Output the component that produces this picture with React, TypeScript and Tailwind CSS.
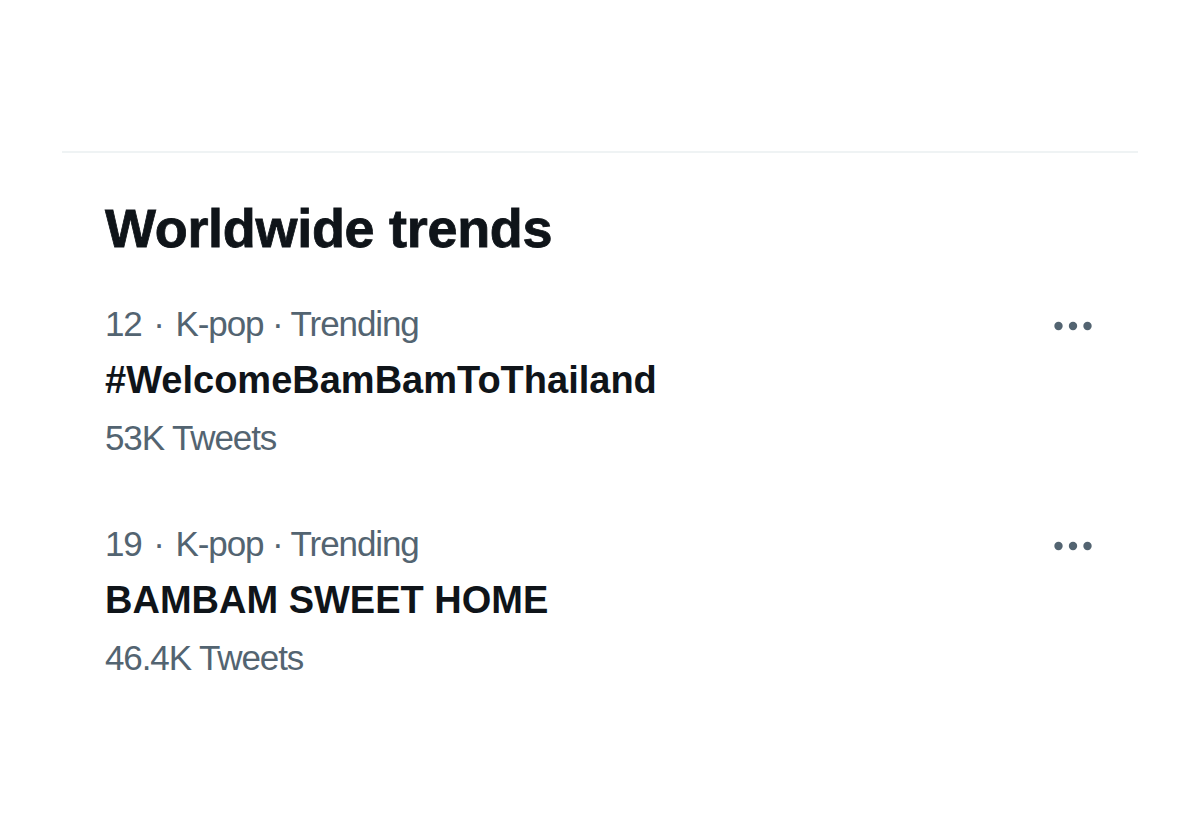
const trends = [
  { rank: 12, category: "K-pop", name: "#WelcomeBamBamToThailand", count: "53K Tweets" },
  { rank: 19, category: "K-pop", name: "BAMBAM SWEET HOME", count: "46.4K Tweets" },
];

function MoreIcon() {
  return (
    <svg width="38" height="10" viewBox="0 0 38 10" className="fill-[#536471]">
      <circle cx="4.5" cy="5" r="4.2" />
      <circle cx="19" cy="5" r="4.2" />
      <circle cx="33.5" cy="5" r="4.2" />
    </svg>
  );
}

export default function App() {
  return (
    <div className="min-h-screen bg-white font-['Liberation_Sans',Arial,sans-serif] pt-[151px] px-[62px]">
      <div className="border-t-2 border-[#eff3f4]">
        <div className="px-[43px]">
          <h2 className="pt-[45px] text-[54px] leading-[60px] font-bold text-[#0f1419] tracking-[-0.3px] [-webkit-text-stroke:0.8px_#0f1419]">
            Worldwide trends
          </h2>

          <div className="mt-[37px] flex flex-col gap-[49px]">
            {trends.map((t) => (
              <div key={t.rank} className="flex items-start justify-between">
                <div className="flex flex-col">
                  <div className="text-[35px] leading-[57px] text-[#536471] tracking-[-1.1px]">
                    {t.rank} <span className="mx-[3px]">·</span> {t.category} · Trending
                  </div>
                  <div className="text-[38px] leading-[57px] font-bold text-[#0f1419]">{t.name}</div>
                  <div className="text-[35px] leading-[57px] text-[#536471] tracking-[-1.1px]">{t.count}</div>
                </div>
                <div className="pt-[26px] pr-[3px]">
                  <MoreIcon />
                </div>
              </div>
            ))}
          </div>
        </div>
      </div>
    </div>
  );
}
